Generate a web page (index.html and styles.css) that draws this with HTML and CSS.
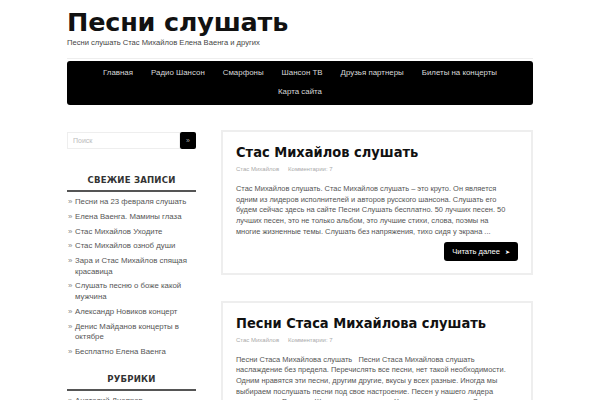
FILE: index.html
```html
<!DOCTYPE html>
<html lang="ru">
<head>
<meta charset="utf-8">
<title>Песни слушать</title>
<link rel="stylesheet" href="styles.css">
</head>
<body>
<div class="page">
  <header class="site-header">
    <h1 class="site-title">Песни слушать</h1>
    <p class="tagline">Песни слушать Стас Михайлов Елена Ваенга и других</p>
  </header>
  <nav class="main-nav">
    <ul>
      <li>Главная</li>
      <li>Радио Шансон</li>
      <li>Смарфоны</li>
      <li>Шансон ТВ</li>
      <li>Друзья партнеры</li>
      <li>Билеты на концерты</li>
      <li>Карта сайта</li>
    </ul>
  </nav>
  <div class="layout">
    <aside class="sidebar">
      <form class="search">
        <input class="search-input" type="text" placeholder="Поиск">
        <button class="search-btn" type="button">»</button>
      </form>
      <section class="widget">
        <h3 class="widget-title">Свежие записи</h3>
        <ul class="widget-list">
          <li>Песни на 23 февраля слушать</li>
          <li>Елена Ваенга. Мамины глаза</li>
          <li>Стас Михайлов Уходите</li>
          <li>Стас Михайлов озноб души</li>
          <li>Зара и Стас Михайлов спящая красавица</li>
          <li>Слушать песню о боже какой мужчина</li>
          <li>Александр Новиков концерт</li>
          <li>Денис Майданов концерты в октябре</li>
          <li>Бесплатно Елена Ваенга</li>
        </ul>
      </section>
      <section class="widget">
        <h3 class="widget-title">Рубрики</h3>
        <ul class="widget-list">
          <li>Анатолий Днепров</li>
        </ul>
      </section>
    </aside>
    <main class="content">
      <article class="post">
        <h2 class="post-title">Стас Михайлов слушать</h2>
        <div class="post-meta"><span>Стас Михайлов</span><span>Комментарии: 7</span></div>
        <p class="post-text">Стас Михайлов слушать. Стас Михайлов слушать – это круто. Он является<br>одним из лидеров исполнителей и авторов русского шансона. Слушать его<br>будем сейчас здесь на сайте Песни Слушать бесплатно. 50 лучших песен. 50<br>лучших песен, это не только альбом, это лучшие стихи, слова, поэмы на<br>многие жизненные темы. Слушать без напряжения, тихо сидя у экрана ...</p>
        <div class="more-row"><a class="more-btn">Читать далее <span class="arrow">➤</span></a></div>
      </article>
      <article class="post">
        <h2 class="post-title">Песни Стаса Михайлова слушать</h2>
        <div class="post-meta"><span>Стас Михайлов</span><span>Комментарии: 7</span></div>
        <p class="post-text">Песни Стаса Михайлова слушать &nbsp; Песни Стаса Михайлова слушать<br>наслаждение без предела. Перечислять все песни, нет такой необходимости.<br>Одним нравятся эти песни, другим другие, вкусы у всех разные. Иногда мы<br>выбираем послушать песни под свое настроение. Песен у нашего лидера<br>исполнителя Русского Шансона очень много. Хорошо, что они есть. Стас</p>
      </article>
    </main>
  </div>
</div>
</body>
</html>
```

FILE: styles.css
```css
html, body {
  margin: 0;
  padding: 0;
  background: #fff;
}
body {
  font-family: "Liberation Sans", Arial, sans-serif;
  color: #555;
}
.page {
  width: 466px;
  margin: 0 auto;
}
.site-header {
  padding-top: 7px;
  border-bottom: 1px solid #eee;
  padding-bottom: 10px;
}
.site-title {
  margin: 0;
  font-family: "DejaVu Sans", sans-serif;
  font-weight: bold;
  font-size: 25.5px;
  line-height: 31px;
  color: #111;
  letter-spacing: -0.2px;
}
.tagline {
  margin: 0;
  font-size: 7.6px;
  line-height: 10px;
  color: #444;
}
.main-nav {
  margin-top: 2px;
  background: #000;
  border-radius: 3px;
  padding: 2px 0 4px;
}
.main-nav ul {
  list-style: none;
  margin: 0;
  padding: 0;
  display: flex;
  flex-wrap: wrap;
  justify-content: center;
}
.main-nav li {
  padding: 0 9px;
  font-size: 7.9px;
  line-height: 19px;
  color: #d8d8d8;
}
.layout {
  display: flex;
  gap: 25px;
  margin-top: 25px;
}
.sidebar {
  width: 129px;
  flex: none;
  padding-top: 2px;
}
.search {
  display: flex;
  margin: 0;
}
.search-input {
  flex: 1;
  min-width: 0;
  height: 17px;
  box-sizing: border-box;
  border: 1px solid #eee;
  padding: 0 5px;
  font-family: inherit;
  font-size: 7px;
  color: #999;
  outline: none;
}
.search-input::placeholder {
  color: #bbb;
}
.search-btn {
  width: 16px;
  height: 17px;
  border: none;
  border-radius: 2px;
  background: #000;
  color: #aaa;
  font-size: 7px;
  padding: 0;
}
.widget {
  margin-top: 24px;
}
.widget + .widget {
  margin-top: 15px;
}
.widget-title {
  margin: 0 0 5px;
  text-align: center;
  font-family: "DejaVu Sans Condensed", "DejaVu Sans", sans-serif;
  font-weight: bold;
  font-size: 9.5px;
  letter-spacing: 0.2px;
  line-height: 14px;
  text-transform: uppercase;
  color: #333;
  border-bottom: 2px solid #555;
  padding-bottom: 3px;
}
.widget-list {
  list-style: none;
  margin: 0;
  padding: 0;
}
.widget-list li {
  position: relative;
  padding-left: 8px;
  font-size: 7.8px;
  line-height: 10.5px;
  margin-bottom: 4.3px;
  color: #555;
}
.widget-list li::before {
  content: "»";
  position: absolute;
  left: 1px;
  top: 0;
  color: #888;
}
.content {
  flex: 1;
  min-width: 0;
}
.post {
  border: 2px solid #eee;
  padding: 10px 13px 12px 13px;
  margin-bottom: 26px;
}
.post-title {
  margin: 0;
  font-family: "DejaVu Sans Condensed", "DejaVu Sans", sans-serif;
  font-weight: bold;
  font-size: 14.5px;
  line-height: 20px;
  color: #111;
}
.post-meta {
  margin-top: 3px;
  display: flex;
  gap: 9px;
  font-size: 6px;
  line-height: 9px;
  color: #aaa;
}
.post-text {
  margin: 10px 0 0;
  font-size: 7.45px;
  line-height: 10.7px;
  color: #555;
  white-space: nowrap;
}
.more-row {
  display: flex;
  justify-content: flex-end;
  margin-top: 4px;
}
.more-btn {
  display: inline-flex;
  align-items: center;
  gap: 5px;
  background: #000;
  color: #fff;
  border-radius: 3px;
  padding: 0 8px;
  height: 19px;
  font-size: 7.6px;
}
.arrow {
  font-size: 6px;
}
```
